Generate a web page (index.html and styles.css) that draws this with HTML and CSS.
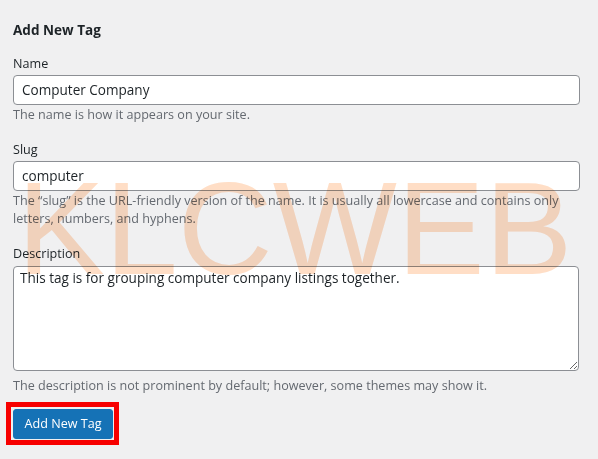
FILE: index.html
```html
<!DOCTYPE html>
<html lang="en">
<head>
<meta charset="utf-8">
<title>Add New Tag</title>
<link rel="stylesheet" href="styles.css">
</head>
<body>
<div class="page">
  <form class="tag-form">
    <h2 class="form-title">Add New Tag</h2>

    <div class="field">
      <label class="field-label" for="tag-name">Name</label>
      <input class="text-input" id="tag-name" type="text" value="Computer Company">
      <p class="help">The name is how it appears on your site.</p>
    </div>

    <div class="field">
      <label class="field-label" for="tag-slug">Slug</label>
      <input class="text-input" id="tag-slug" type="text" value="computer">
      <p class="help">The “slug” is the URL-friendly version of the name. It is usually all lowercase and contains only letters, numbers, and hyphens.</p>
    </div>

    <div class="field">
      <label class="field-label" for="tag-desc">Description</label>
      <textarea class="text-area" id="tag-desc">This tag is for grouping computer company listings together.</textarea>
      <p class="help help-after-area">The description is not prominent by default; however, some themes may show it.</p>
    </div>

    <div class="submit-row">
      <span class="highlight-box"><button class="btn-primary" type="button">Add New Tag</button></span>
    </div>
  </form>
  <div class="watermark" aria-hidden="true">KLCWEB</div>
</div>
</body>
</html>
```
FILE: styles.css
```css
html, body {
  margin: 0;
  padding: 0;
  background: #f0f0f1;
}

.page {
  position: relative;
  min-height: 459px;
  padding: 21.25px 18px 0 13px;
  box-sizing: border-box;
  font-family: "Open Sans", "Noto Sans", sans-serif;
  font-size: 12.6px;
  color: #1d2327;
}

.tag-form {
  display: flex;
  flex-direction: column;
}

.form-title {
  margin: 0;
  font-size: 13.55px;
  line-height: 19px;
  font-weight: 700;
  color: #1d2327;
}

.field {
  display: flex;
  flex-direction: column;
  margin-top: 16.3px;
}

.field:first-of-type {
  margin-top: 14.6px;
}

.field-label {
  display: block;
  line-height: 18.5px;
  color: #1d2327;
}

.text-input {
  display: block;
  box-sizing: border-box;
  width: 100%;
  height: 30px;
  margin: 2px 0 0;
  padding: 0 8px;
  border: 1px solid #8c8f94;
  border-radius: 4px;
  background: #fff;
  font-family: inherit;
  font-size: 13.55px;
  line-height: 28px;
  color: #1d2327;
  outline: none;
}

.text-area {
  display: block;
  box-sizing: border-box;
  width: 566px;
  height: 104.5px;
  margin: 2.6px 0 0;
  padding: 2px 6px;
  border: 1px solid #8c8f94;
  border-radius: 4px;
  background: #fff;
  font-family: inherit;
  font-size: 13.55px;
  line-height: 19.4px;
  color: #1d2327;
  resize: vertical;
  outline: none;
}

.help {
  margin: 0.5px 0 0;
  line-height: 18.5px;
  color: #646970;
}

.help-after-area {
  margin-top: 6.3px;
}

.submit-row {
  display: flex;
  margin-top: 7px;
}

.highlight-box {
  display: inline-flex;
  margin-left: -7px;
  padding: 2px 1px 1px 2px;
  border: 5px solid #f70000;
}

.btn-primary {
  display: block;
  height: 30px;
  margin: 0;
  padding: 0 10.5px;
  border: 1px solid #1572b6;
  border-radius: 3px;
  background: #1572b6;
  color: #fff;
  font-family: inherit;
  font-size: 12.6px;
  line-height: 28px;
  cursor: pointer;
}

.watermark {
  position: absolute;
  left: 17px;
  top: 162.7px;
  font-family: "Liberation Sans", Arial, sans-serif;
  font-size: 131.5px;
  line-height: 1;
  color: rgb(255, 222, 198);
  mix-blend-mode: multiply;
  pointer-events: none;
  white-space: nowrap;
}
```
